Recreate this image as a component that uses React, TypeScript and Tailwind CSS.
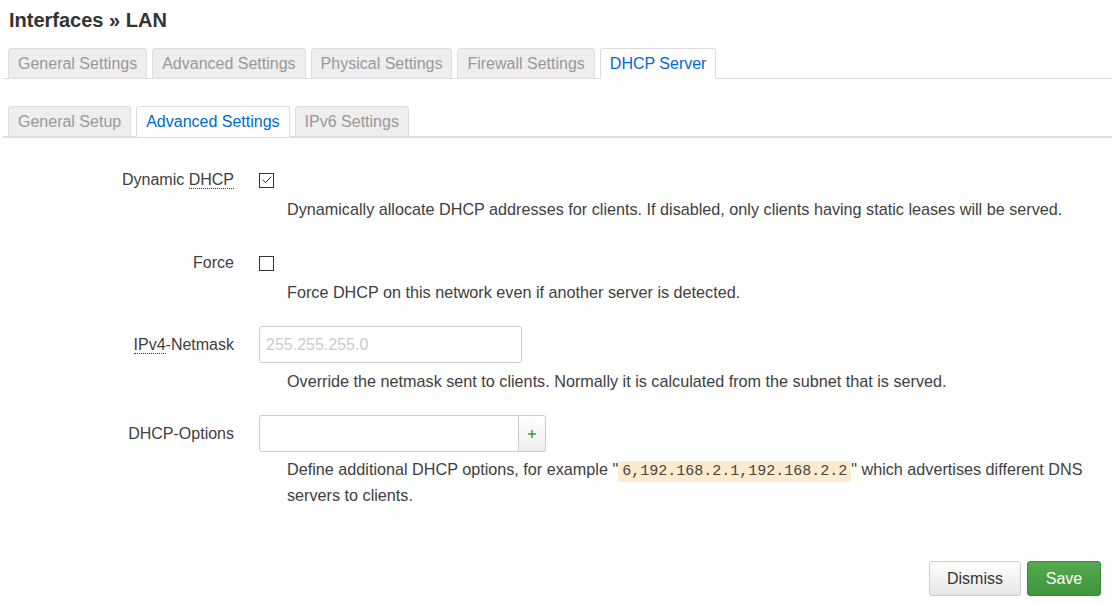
import { Check, Plus } from "lucide-react";

const mainTabs = [
  "General Settings",
  "Advanced Settings",
  "Physical Settings",
  "Firewall Settings",
  "DHCP Server",
];
const subTabs = ["General Setup", "Advanced Settings", "IPv6 Settings"];

const Tab = ({ label, active }: { label: string; active: boolean }) => (
  <li
    className={`-mb-px h-[31px] px-[9px] flex items-center rounded-t-[3px] border border-[#ddd] text-[16px] ${
      active
        ? "bg-white text-[#0069d6] border-b-white"
        : "bg-[#eee] text-[#999] border-b-[#ddd]"
    }`}
  >
    {label}
  </li>
);

const Abbr = ({ children }: { children: React.ReactNode }) => (
  <span className="border-b border-dotted border-[#404040] leading-[17px] inline-block">
    {children}
  </span>
);

const Row = ({
  label,
  control,
  desc,
  descGap,
  className,
}: {
  label: React.ReactNode;
  control: React.ReactNode;
  desc: React.ReactNode;
  descGap: string;
  className: string;
}) => (
  <div className={className}>
    <div className="flex items-center leading-[16px]">
      <div className="w-[234px] shrink-0 text-right text-[16px] leading-[16px] text-[#404040]">
        {label}
      </div>
      <div className="ml-[25px]">{control}</div>
    </div>
    <div className={`ml-[287px] mr-[20px] text-[16.2px] text-[#404040] leading-[26px] ${descGap}`}>
      {desc}
    </div>
  </div>
);

export default function App() {
  return (
    <div className="min-h-screen bg-white font-['Liberation_Sans',Arial,sans-serif] text-[#404040]">
      <h2 className="px-[9px] pt-[6px] text-[20px] leading-[28px] font-bold text-[#333]">
        Interfaces » LAN
      </h2>

      {/* main tabs */}
      <ul className="mt-[14px] ml-[3px] pl-[5px] flex gap-[5px] border-b border-[#ddd]">
        {mainTabs.map((t) => (
          <Tab key={t} label={t} active={t === "DHCP Server"} />
        ))}
      </ul>

      {/* sub tabs */}
      <ul className="mt-[27px] ml-[3px] pl-[5px] flex gap-[5px] border-b-2 border-[#ddd]">
        {subTabs.map((t) => (
          <Tab key={t} label={t} active={t === "Advanced Settings"} />
        ))}
      </ul>

      <div className="pt-[33px]">
        <Row
          className=""
          descGap="mt-[7px]"
          label={
            <>
              Dynamic <Abbr>DHCP</Abbr>
            </>
          }
          control={
            <div className="h-[16px] flex items-center">
              <span className="w-[15px] h-[15px] border border-[#333] flex items-center justify-center">
                <Check className="w-[12px] h-[12px] text-[#333]" strokeWidth={2} />
              </span>
            </div>
          }
          desc="Dynamically allocate DHCP addresses for clients. If disabled, only clients having static leases will be served."
        />

        <Row
          className="mt-[33px]"
          descGap="mt-[8px]"
          label="Force"
          control={
            <div className="h-[16px] flex items-center">
              <span className="w-[15px] h-[15px] border border-[#333]" />
            </div>
          }
          desc="Force DHCP on this network even if another server is detected."
        />

        <Row
          className="mt-[21px]"
          descGap="mt-[5px]"
          label={
            <>
              <Abbr>IPv4</Abbr>-Netmask
            </>
          }
          control={
            <div className="w-[263px] h-[37px] border border-[#ccc] rounded-[3px] px-[6px] flex items-center text-[16px] text-[#ccc]">
              255.255.255.0
            </div>
          }
          desc="Override the netmask sent to clients. Normally it is calculated from the subnet that is served."
        />

        <Row
          className="mt-[21px]"
          descGap="mt-[4px]"
          label="DHCP-Options"
          control={
            <div className="flex w-[287px] h-[37px]">
              <div className="flex-1 border border-[#ccc] rounded-l-[3px]" />
              <div className="w-[27px] border border-l-0 border-[#ccc] rounded-r-[3px] bg-gradient-to-b from-white to-[#eee] flex items-center justify-center">
                <Plus className="w-[12px] h-[12px] text-[#3a9a3a]" strokeWidth={3} />
              </div>
            </div>
          }
          desc={
            <>
              Define additional DHCP options, for example "
              <code className="bg-[#fdebcd] rounded-[3px] px-[4px] py-[2px] text-[15px] leading-none font-['Liberation_Mono',monospace] text-[#444]">
                6,192.168.2.1,192.168.2.2
              </code>
              " which advertises different DNS servers to clients.
            </>
          }
        />
      </div>

      <div className="flex justify-end gap-[6px] pr-[11px] mt-[53px]">
        <button className="w-[92px] h-[35px] border border-[#ccc] rounded-[3px] bg-gradient-to-b from-white to-[#e6e6e6] text-[16px] text-[#333]">
          Dismiss
        </button>
        <button className="w-[74px] h-[35px] border border-[#3b8a37] rounded-[3px] bg-gradient-to-b from-[#55aa50] to-[#3f953b] text-[16px] text-white">
          Save
        </button>
      </div>
    </div>
  );
}
